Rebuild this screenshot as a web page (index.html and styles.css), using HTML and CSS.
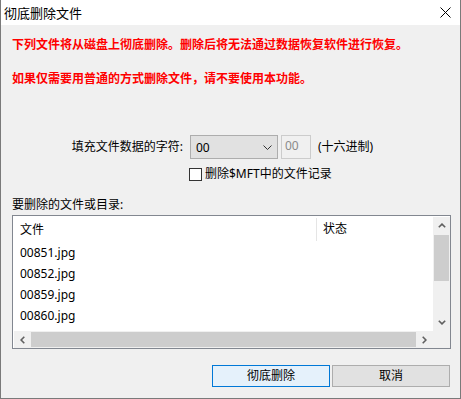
FILE: index.html
```html
<!DOCTYPE html>
<html lang="zh-CN">
<head>
<meta charset="utf-8">
<title>彻底删除文件</title>
<link rel="stylesheet" href="styles.css">
</head>
<body>
<div class="window">
  <div class="titlebar">
    <span class="title">彻底删除文件</span>
    <span class="close">
      <svg width="11" height="11" viewBox="0 0 11 11"><path d="M0.5 0.5 L10.5 10.5 M10.5 0.5 L0.5 10.5" stroke="#000" stroke-width="1" fill="none"/></svg>
    </span>
  </div>
  <div class="content">
    <p class="warn first">下列文件将从磁盘上彻底删除。删除后将无法通过数据恢复软件进行恢复。</p>
    <p class="warn second">如果仅需要用普通的方式删除文件，请不要使用本功能。</p>

    <div class="fill-row">
      <span class="fill-label">填充文件数据的字符:</span>
      <div class="combo">
        <span class="combo-value">00</span>
        <svg class="combo-arrow" width="9" height="5" viewBox="0 0 9 5"><path d="M0.5 0.5 L4.5 4.5 L8.5 0.5" stroke="#333" stroke-width="1" fill="none"/></svg>
      </div>
      <div class="hexfield">00</div>
      <span class="hex-note">(十六进制)</span>
    </div>

    <label class="check-row">
      <span class="checkbox"></span>
      <span>删除$MFT中的文件记录</span>
    </label>

    <div class="list-label">要删除的文件或目录:</div>

    <div class="listbox">
      <div class="list-area">
        <div class="list-header">
          <span class="col-file">文件</span>
          <span class="col-state">状态</span>
        </div>
        <div class="list-row">00851.jpg</div>
        <div class="list-row">00852.jpg</div>
        <div class="list-row">00859.jpg</div>
        <div class="list-row">00860.jpg</div>
      </div>
      <div class="vscroll">
        <span class="sb-btn">
          <svg width="8" height="5" viewBox="0 0 8 5"><path d="M0.8 4.3 L4 1.1 L7.2 4.3" stroke="#606060" stroke-width="1.6" fill="none"/></svg>
        </span>
        <span class="vthumb"></span>
        <span class="vspace"></span>
        <span class="sb-btn">
          <svg width="8" height="5" viewBox="0 0 8 5"><path d="M0.8 0.7 L4 3.9 L7.2 0.7" stroke="#606060" stroke-width="1.6" fill="none"/></svg>
        </span>
      </div>
      <div class="hscroll">
        <span class="sb-btn">
          <svg width="5" height="8" viewBox="0 0 5 8"><path d="M4.3 0.8 L1.1 4 L4.3 7.2" stroke="#606060" stroke-width="1.6" fill="none"/></svg>
        </span>
        <span class="hthumb"></span>
        <span class="sb-btn">
          <svg width="5" height="8" viewBox="0 0 5 8"><path d="M0.7 0.8 L3.9 4 L0.7 7.2" stroke="#606060" stroke-width="1.6" fill="none"/></svg>
        </span>
      </div>
      <div class="corner"></div>
    </div>

    <div class="buttons">
      <button class="btn default">彻底删除</button>
      <button class="btn">取消</button>
    </div>
  </div>
</div>
</body>
</html>
```
FILE: styles.css
```css
* { box-sizing: border-box; }
html, body {
  margin: 0;
  padding: 0;
  background: #f0f0f0;
}
body {
  font-family: "Noto Sans", "Noto Sans CJK SC", sans-serif;
  font-size: 12px;
  color: #000;
}
.window {
  width: 461px;
  height: 399px;
  border: 1px solid #7a7a7a;
  border-top: none;
  display: flex;
  flex-direction: column;
  background: #f0f0f0;
}
.titlebar {
  height: 25px;
  background: #fff;
  display: flex;
  align-items: center;
  justify-content: space-between;
  padding: 0 9px 0 3px;
}
.title {
  font-size: 13px;
  line-height: 16px;
}
.close {
  display: flex;
  width: 11px;
  height: 11px;
}
.content {
  flex: 1;
  display: flex;
  flex-direction: column;
  padding: 12px 10px 0 11px;
}
.warn {
  margin: 0;
  color: #ff0000;
  font-weight: bold;
  line-height: 16px;
}
.second { margin-top: 18px; }

.fill-row {
  display: flex;
  align-items: center;
  margin-top: 48px;
  height: 24px;
}
.fill-label {
  width: 171px;
  text-align: right;
  line-height: 16px;
  margin-right: 7px;
}
.combo {
  width: 88px;
  height: 24px;
  background: #e1e1e1;
  border: 1px solid #adadad;
  display: flex;
  align-items: center;
  justify-content: space-between;
  padding: 0 5px 0 5px;
}
.combo-value {
  line-height: 16px;
  padding-top: 1px;
}
.combo-arrow { display: block; }
.hexfield {
  width: 30px;
  height: 24px;
  margin-left: 3px;
  border: 1px solid #cccccc;
  background: #f0f0f0;
  color: #8a8a8a;
  line-height: 20px;
  padding-left: 3px;
}
.hex-note {
  margin-left: 7px;
  line-height: 16px;
}

.check-row {
  display: flex;
  align-items: center;
  margin-top: 7px;
  margin-left: 177px;
  line-height: 16px;
}
.checkbox {
  width: 13px;
  height: 13px;
  border: 1px solid #333;
  background: #fff;
  margin-right: 3px;
}

.list-label {
  margin-top: 15px;
  line-height: 16px;
}
.listbox {
  margin-top: 2px;
  width: 439px;
  height: 134px;
  border: 1px solid #828790;
  background: #fff;
  display: grid;
  grid-template-columns: 1fr 17px;
  grid-template-rows: 1fr 17px;
}
.list-area {
  overflow: hidden;
}
.list-header {
  height: 26px;
  display: flex;
  align-items: center;
}
.col-file {
  width: 304px;
  padding-left: 7px;
  line-height: 16px;
  align-self: stretch;
  display: flex;
  align-items: center;
  border-right: 1px solid #e5e5e5;
  margin-top: 2px;
  margin-bottom: 1px;
}
.col-state {
  padding-left: 6px;
  line-height: 16px;
}
.list-row {
  height: 21px;
  line-height: 21px;
  padding-left: 7px;
}
.vscroll {
  background: #f0f0f0;
  display: flex;
  flex-direction: column;
  align-items: center;
  margin-top: 1px;
}
.vscroll .sb-btn {
  width: 17px;
  height: 17px;
}
.sb-btn {
  display: flex;
  align-items: center;
  justify-content: center;
  flex: none;
}
.vthumb {
  width: 15px;
  height: 46px;
  margin-top: 1px;
  background: #cdcdcd;
}
.vspace { flex: 1; }
.hscroll {
  background: #f0f0f0;
  display: flex;
  align-items: center;
  margin-left: 1px;
}
.hscroll .sb-btn {
  width: 17px;
  height: 17px;
}
.hthumb {
  flex: 1;
  height: 15px;
  background: #cdcdcd;
}
.corner { background: #f0f0f0; }

.buttons {
  margin-top: 16px;
  display: flex;
  justify-content: flex-end;
  gap: 2px;
  padding-right: 0;
}
.btn {
  width: 118px;
  height: 22px;
  font-family: inherit;
  font-size: 12px;
  line-height: 16px;
  padding: 0;
  color: #000;
  background: #e1e1e1;
  border: 1px solid #adadad;
  border-radius: 0;
}
.btn.default {
  background: #e5f1fb;
  border-color: #0078d7;
}
```
